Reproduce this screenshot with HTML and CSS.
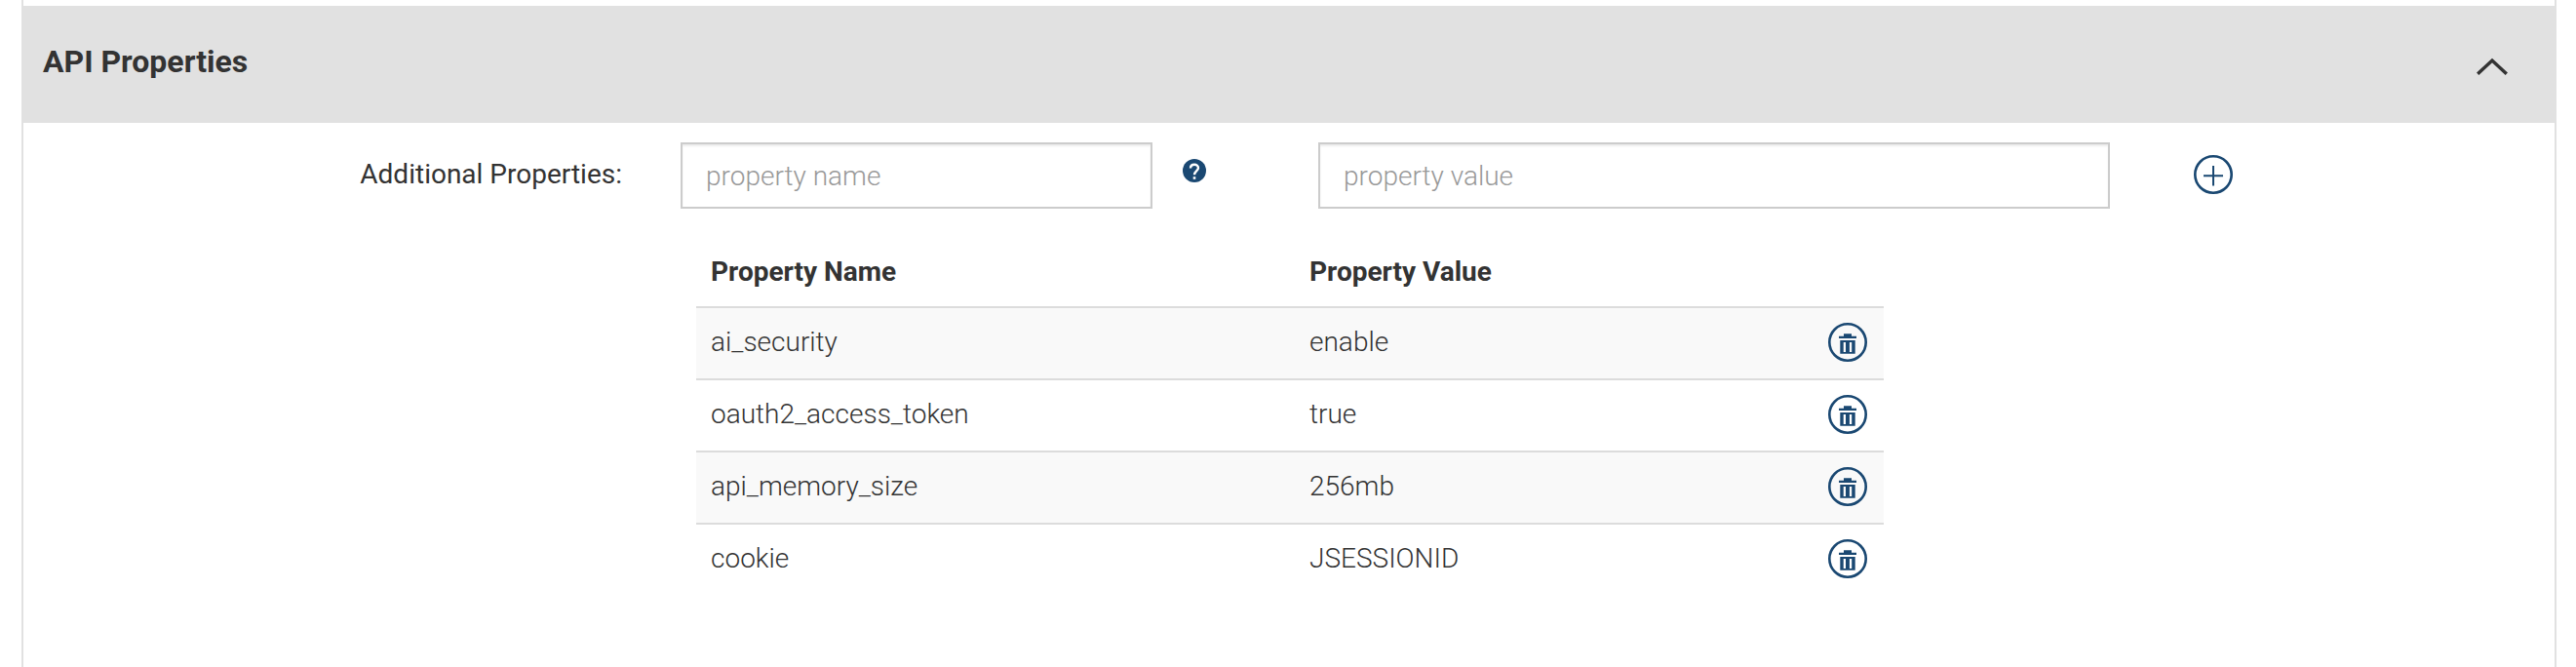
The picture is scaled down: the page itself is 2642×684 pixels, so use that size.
FILE: index.html
```html
<!DOCTYPE html>
<html lang="en">
<head>
<meta charset="utf-8">
<title>API Properties</title>
<link rel="stylesheet" href="styles.css">
</head>
<body>
<svg class="sprite" aria-hidden="true">
  <symbol id="trash" viewBox="0 0 40 40">
    <circle cx="20" cy="20" r="18.7" fill="none" stroke="#1a4872" stroke-width="2.6"/>
    <path fill="#1a4872" d="M16 11.2h8v2.6h5v2.200h-18v-2.200h5z"/>
    <path fill="#1a4872" fill-rule="evenodd" d="M12.300 18h15.400v13.700h-15.400zM15.700 20v10h2.300v-10zM21.900 20v10h2.300v-10z"/>
  </symbol>
</svg>
<section class="panel">
  <header class="panel-header">
    <h2 class="panel-title">API Properties</h2>
    <svg class="chevron" viewBox="0 0 32 18"><path d="M1.200 16.800 16 3 30.800 16.800" fill="none" stroke="#333" stroke-width="3.400"/></svg>
  </header>
  <div class="panel-body">
    <form class="entry">
      <label class="entry-label" for="name">Additional Properties:</label>
      <input class="field field-name" id="name" placeholder="property name">
      <svg class="help" viewBox="0 0 24 24"><circle cx="12" cy="12" r="12" fill="#1a4872"/><path d="M8 9.500C8 4.500 16 4.500 16 9.300C16 12 12 12.300 12 16.300" fill="none" stroke="#fff" stroke-width="2.400"/><path d="M10.700 18.200h2.600v2.600h-2.600z" fill="#fff"/></svg>
      <input class="field field-value" aria-label="property value" placeholder="property value">
      <svg class="add" viewBox="0 0 40 40"><circle cx="20" cy="20" r="18.700" fill="none" stroke="#1a4872" stroke-width="2.600"/><path d="M10 21.300h20M20 11v20.500" fill="none" stroke="#1a4872" stroke-width="2"/></svg>
    </form>
    <table class="props">
      <thead><tr><th class="col-name">Property Name</th><th class="col-value">Property Value</th><th></th></tr></thead>
      <tbody>
        <tr><td>ai_security</td><td>enable</td><td><svg class="trash"><use href="#trash"/></svg></td></tr>
        <tr><td>oauth2_access_token</td><td>true</td><td><svg class="trash"><use href="#trash"/></svg></td></tr>
        <tr><td>api_memory_size</td><td>256mb</td><td><svg class="trash"><use href="#trash"/></svg></td></tr>
        <tr><td>cookie</td><td>JSESSIONID</td><td><svg class="trash"><use href="#trash"/></svg></td></tr>
      </tbody>
    </table>
  </div>
</section>
</body>
</html>
```
FILE: styles.css
```css
* { box-sizing: border-box; }
body {
  margin: 0;
  background: #fff;
  color: #333;
  font: 300 28px/40px Roboto, sans-serif;
}
.sprite { display: none; }
.panel {
  height: 684px;
  margin: 0 20px 0 22px;
  padding-top: 6px;
  border: solid #e1e1e1;
  border-width: 0 2px;
}
.panel-header {
  display: flex;
  align-items: center;
  justify-content: space-between;
  height: 120px;
  padding: 0 48px 0 20px;
  background: #e1e1e1;
}
.panel-title {
  margin: 0 0 6px;
  font-size: 32px;
  line-height: 40px;
  font-weight: 700;
}
.chevron { width: 32px; height: 18px; margin-top: 3px; }
.panel-body { padding-top: 20px; }
.entry { display: flex; align-items: flex-start; margin: 0; }
.entry-label {
  width: 614px;
  padding-top: 13px;
  text-align: right;
  font-weight: 400;
}
.field {
  height: 68px;
  padding: 0 24px;
  border: 2px solid #ccc;
  border-radius: 0;
  background: #fff;
  box-shadow: inset 0 2px 2px rgba(0, 0, 0, .075);
  font: inherit;
  outline: 0;
}
.field::placeholder { color: #999; opacity: 1; }
.field-name { width: 484px; margin-left: 60px; }
.field-value { width: 812px; margin-left: 115px; }
.help { width: 24px; height: 24px; margin: 17px 0 0 31px; }
.add { width: 40px; height: 40px; margin: 13px 0 0 86px; }
.props {
  width: 1218px;
  margin: 30px 0 0 690px;
  border-collapse: separate;
  border-spacing: 0;
  table-layout: fixed;
}
.props th { height: 70px; padding: 0 15px; text-align: left; font-weight: 700; }
.props td { height: 74px; padding: 0 15px 2px; border-top: 2px solid #dcdcdc; }
.props tbody tr:nth-child(odd) { background: #f9f9f9; }
.col-name { width: 614px; }
.col-value { width: 532px; }
.props td:last-child { padding: 0 15px 2px; }
.trash { display: block; width: 40px; height: 40px; }
```
